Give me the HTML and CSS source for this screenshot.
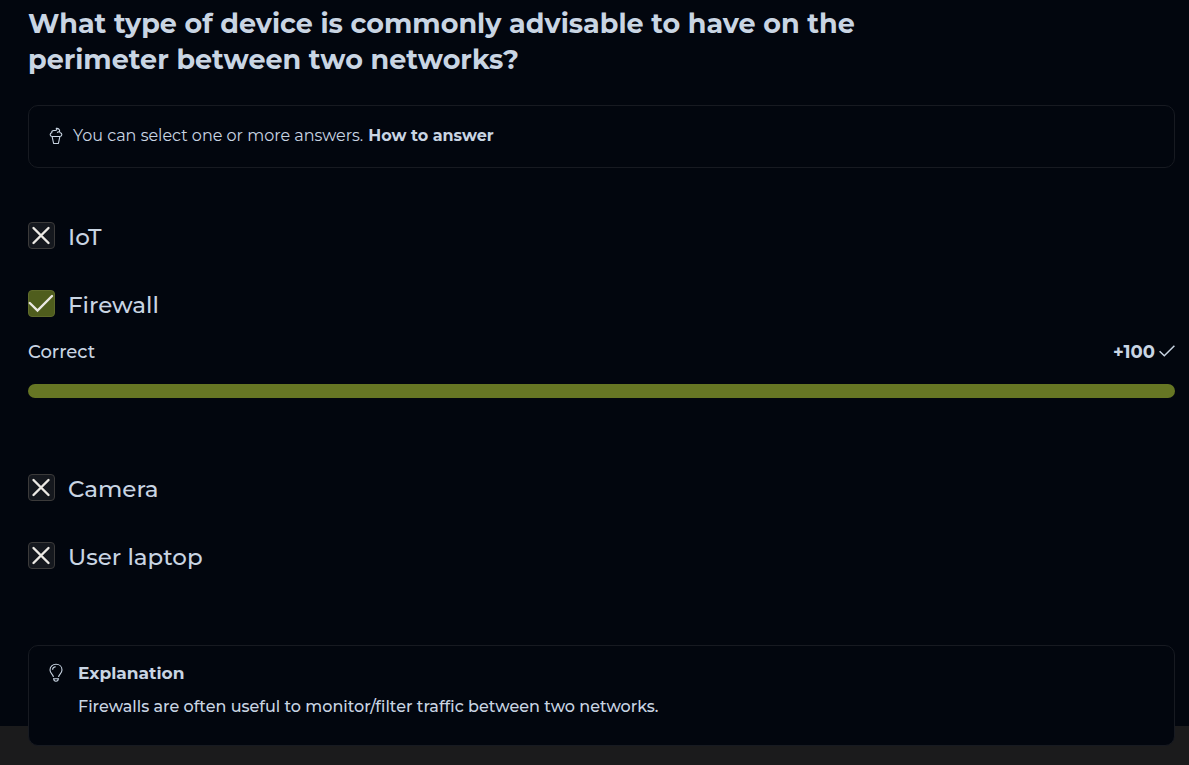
FILE: index.html
```html
<!DOCTYPE html>
<html lang="en">
<head>
<meta charset="utf-8">
<meta name="viewport" content="width=device-width, initial-scale=1">
<title>Quiz question</title>
<link rel="stylesheet" href="styles.css">
</head>
<body>
<svg class="sprite" aria-hidden="true">
  <symbol id="cross" viewBox="0 0 27 27"><path d="M5.5 6 L20.5 21 M20.5 6 L5.5 21"/></symbol>
  <symbol id="check" viewBox="0 0 27 27"><path d="M1.8 13 L9.5 20.5 L24 6"/></symbol>
</svg>
<main class="question">
  <h1 class="title">What type of device is commonly advisable to have on the perimeter between two networks?</h1>

  <div class="card hint">
    <svg class="icon" viewBox="0 0 14 18" aria-hidden="true"><path d="M3 9.5 C.7 9.3 .5 6.3 2.8 5.8 C2.4 4.2 3.6 3.4 5 3.5 H6.2 C7.8 3.5 8.2 2.2 7.2 1.4 C9.8 1.1 11.2 3 10.4 4.6 L8 5.5 M10.6 4.8 L11.2 5.8 C13.5 6.3 13.3 9.3 11 9.5 M2.4 9.5 H11.6 M3.2 9.8 L4.6 16.5 H9.4 L10.8 9.8"/></svg>
    <span class="hint-text">You can select one or more answers.</span>
    <a class="hint-link" href="#how">How to answer</a>
  </div>

  <form class="options">
    <div class="option">
      <span class="box"><input type="checkbox" id="iot"><svg class="mark" aria-hidden="true"><use href="#cross"/></svg></span>
      <label for="iot">IoT</label>
    </div>
    <div class="option">
      <span class="box"><input type="checkbox" id="firewall" checked><svg class="mark" aria-hidden="true"><use href="#check"/></svg></span>
      <label for="firewall">Firewall</label>
    </div>
    <div class="result">
      <div class="result-row">
        <label for="score">Correct</label>
        <span class="points">+100 <svg class="tick" viewBox="0 0 16 14" aria-hidden="true"><path d="M.6 6.3 L5.3 10.8 L15.4 .8"/></svg></span>
      </div>
      <progress class="bar" id="score" value="100" max="100"></progress>
    </div>
    <div class="option">
      <span class="box"><input type="checkbox" id="camera"><svg class="mark" aria-hidden="true"><use href="#cross"/></svg></span>
      <label for="camera">Camera</label>
    </div>
    <div class="option">
      <span class="box"><input type="checkbox" id="laptop"><svg class="mark" aria-hidden="true"><use href="#cross"/></svg></span>
      <label for="laptop">User laptop</label>
    </div>
  </form>

  <section class="card explanation">
    <svg class="icon bulb" viewBox="0 0 14 20" aria-hidden="true"><path d="M4.4 14 C4.4 11.6 1 10.2 1 6.9 C1 3.5 3.6 1.3 7 1.3 S13 3.5 13 6.9 C13 10.2 9.6 11.6 9.6 14 M4 15.7 H10 M4.8 16 C4.8 18.9 9.2 18.9 9.2 16 M3.6 6.7 C3.6 4.9 4.8 3.8 6.7 3.7"/></svg>
    <div class="explanation-body">
      <h2>Explanation</h2>
      <p>Firewalls are often useful to monitor/filter traffic between two networks.</p>
    </div>
  </section>
</main>
</body>
</html>
```
FILE: styles.css
```css
* { box-sizing: border-box; }

body {
  margin: 0;
  background: #1b1b1c;
  color: #c9d5e3;
  font-family: Montserrat, Inter, "Open Sans", sans-serif;
  font-weight: 500;
}

.sprite { display: none; }

.question {
  display: flow-root;
  margin-bottom: 40px;
  padding: 6px 14px 0 28px;
  background: #02060e;
}

.title {
  max-width: 860px;
  margin: 0 0 27px;
  font-size: 27px;
  line-height: 36px;
  font-weight: 700;
}

.card {
  border: 1px solid #171a21;
  border-radius: 10px;
  background: #02060e;
}

.icon {
  flex: none;
  width: 14px;
  height: 18px;
  fill: none;
  stroke: #c9d5e3;
  stroke-width: 1.1;
  stroke-linejoin: round;
}

.hint {
  display: flex;
  align-items: center;
  gap: 5px;
  padding: 18px 20px 20px;
  font-size: 16px;
  line-height: 23px;
}

.hint .icon { margin-right: 5px; }

.hint-text { font-weight: 400; }

.hint-link {
  color: #c9d5e3;
  font-weight: 700;
  text-decoration: none;
}

.options {
  display: flex;
  flex-direction: column;
  gap: 30px;
  padding-top: 50px;
}

.option {
  display: flex;
  align-items: flex-start;
  gap: 13px;
  min-height: 38px;
  font-size: 23px;
  line-height: 36px;
}

.option label { padding-top: 1px; }

.box {
  position: relative;
  width: 27px;
  height: 27px;
  margin-top: 4px;
}

.box input {
  display: block;
  appearance: none;
  width: 27px;
  height: 27px;
  margin: 0;
  border: 1px solid #3b3a3a;
  border-radius: 4px;
  background: #15181e;
}

.box input:checked {
  border-color: #5f6b2b;
  background: #4f5d1d;
}

.mark {
  position: absolute;
  inset: 0;
  width: 27px;
  height: 27px;
  fill: none;
  stroke: #ece9e4;
  stroke-width: 2.4;
  stroke-linecap: round;
  pointer-events: none;
}

.result {
  margin: -16px 0 42px;
}

.result-row {
  display: flex;
  justify-content: space-between;
  font-size: 18px;
  line-height: 28px;
}

.points {
  display: flex;
  align-items: center;
  gap: 4px;
  font-weight: 700;
}

.tick {
  width: 16px;
  height: 14px;
  fill: none;
  stroke: #c9d5e3;
  stroke-width: 1.5;
}

.bar {
  display: block;
  appearance: none;
  width: 100%;
  height: 14px;
  margin-top: 18px;
  border: 0;
  border-radius: 7px;
  overflow: hidden;
  background: #15181e;
}

.bar::-webkit-progress-bar { background: #15181e; }
.bar::-webkit-progress-value { background: #667624; }

.explanation {
  display: flex;
  gap: 15px;
  margin: 69px 0 -20px;
  padding: 13px 20px 25px;
}

.bulb { height: 20px; margin-top: 4px; }

.explanation h2 {
  margin: 0;
  font-size: 17px;
  line-height: 28px;
  font-weight: 700;
}

.explanation p {
  margin: 6px 0 0;
  font-size: 16px;
  line-height: 27px;
}
```
